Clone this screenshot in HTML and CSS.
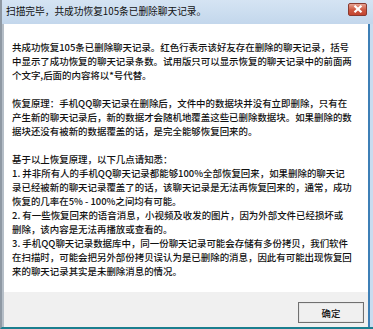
FILE: index.html
```html
<!DOCTYPE html>
<html lang="zh-CN">
<head>
<meta charset="utf-8">
<link rel="stylesheet" href="styles.css">
</head>
<body>
<div class="window">
  <div class="titlebar">
    <span class="title">扫描完毕，共成功恢复105条已删除聊天记录。</span>
    <span class="close">
      <svg width="10" height="8" viewBox="0 0 10 8"><path d="M1.5 0.8 L8.5 7.2 M8.5 0.8 L1.5 7.2" stroke="#fff" stroke-width="2.2" stroke-linecap="butt"/></svg>
    </span>
  </div>
  <div class="body">
    <div class="content">
      <div class="para">
        <span class="line">共成功恢复105条已删除聊天记录。红色行表示该好友存在删除的聊天记录，括号</span>
        <span class="line">中显示了成功恢复的聊天记录条数。试用版只可以显示恢复的聊天记录中的前面两</span>
        <span class="line">个文字,后面的内容将以*号代替。</span>
      </div>
      <div class="para">
        <span class="line">恢复原理：手机QQ聊天记录在删除后，文件中的数据块并没有立即删除，只有在</span>
        <span class="line">产生新的聊天记录后，新的数据才会随机地覆盖这些已删除数据块。如果删除的数</span>
        <span class="line">据块还没有被新的数据覆盖的话，是完全能够恢复回来的。</span>
      </div>
      <div class="para">
        <span class="line">基于以上恢复原理，以下几点请知悉：</span>
        <span class="line">1. 并非所有人的手机QQ聊天记录都能够100%全部恢复回来，如果删除的聊天记</span>
        <span class="line">录已经被新的聊天记录覆盖了的话，该聊天记录是无法再恢复回来的，通常，成功</span>
        <span class="line">恢复的几率在5% - 100%之间均有可能。</span>
        <span class="line">2. 有一些恢复回来的语音消息，小视频及收发的图片，因为外部文件已经损坏或</span>
        <span class="line">删除，该内容是无法再播放或查看的。</span>
        <span class="line">3. 手机QQ聊天记录数据库中，同一份聊天记录可能会存储有多份拷贝，我们软件</span>
        <span class="line">在扫描时，可能会把另外部份拷贝误认为是已删除的消息，因此有可能出现恢复回</span>
        <span class="line">来的聊天记录其实是未删除消息的情况。</span>
      </div>
    </div>
    <div class="footer">
      <button class="ok">确定</button>
    </div>
  </div>
</div>
</body>
</html>
```
FILE: styles.css
```css
html, body {
  margin: 0;
  padding: 0;
  background: #ffffff;
}
.window {
  width: 373px;
  height: 329px;
  display: flex;
  flex-direction: column;
  box-sizing: border-box;
  font-family: "Noto Sans CJK SC", "Liberation Sans", sans-serif;
  color: #111111;
  background: #c9dcef;
  border-left: 2px solid #8f99a4;
  border-bottom: 2px solid #1b7f8f;
  overflow: hidden;
}
.titlebar {
  height: 24px;
  flex: 0 0 24px;
  display: flex;
  align-items: center;
  justify-content: space-between;
  padding: 0 6px 0 4px;
  background: linear-gradient(#d5e4f3, #c3d7ec);
}
.title {
  font-size: 9.7px;
  line-height: 14px;
  color: #111111;
  margin-top: -2px;
}
.close {
  width: 19px;
  height: 13px;
  margin-top: -6px;
  box-sizing: border-box;
  border: 1px solid #8a3a30;
  border-radius: 2px;
  background: linear-gradient(#e6a494, #cf5b44 50%, #c34530);
  display: flex;
  align-items: center;
  justify-content: center;
}
.body {
  flex: 1;
  display: flex;
  flex-direction: column;
  margin-right: 3px;
  border-left: 2px solid #b5bec7;
  border-right: 2px solid #3d7fb6;
}
.content {
  flex: 1;
  background: #ffffff;
  padding: 16px 6px 0 8px;
  font-size: 9.45px;
  line-height: 14px;
  font-weight: 500;
}
.para {
  margin-bottom: 14px;
}
.line {
  display: block;
  white-space: nowrap;
}
.footer {
  flex: 0 0 42px;
  background: #f0f0f0;
  display: flex;
  align-items: flex-start;
  justify-content: flex-end;
  padding: 10px 4px 0 0;
  box-sizing: border-box;
  border-bottom: 1px solid #b9d4e8;
}
.ok {
  width: 66px;
  height: 21px;
  box-sizing: border-box;
  border: 1px solid #707070;
  outline: 1px solid #e6e6e6;
  outline-offset: -2px;
  background: #f0f0f0;
  font-family: "Noto Sans CJK SC", sans-serif;
  font-size: 9.4px;
  font-weight: 500;
  color: #111111;
  padding: 0;
}
```
